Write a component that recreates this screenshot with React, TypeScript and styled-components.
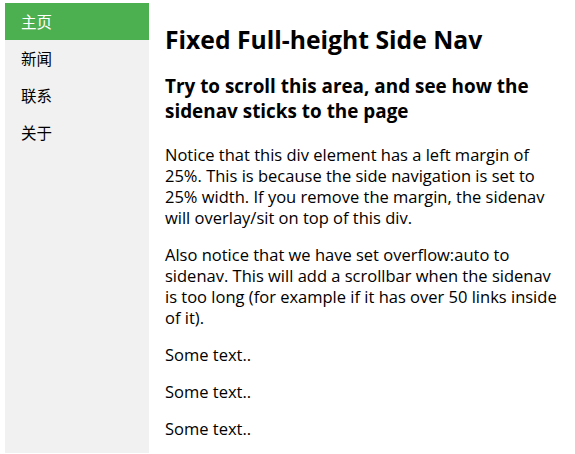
import styled, { createGlobalStyle } from 'styled-components';

const GlobalStyle = createGlobalStyle`
  html, body {
    margin: 0;
    padding: 0;
    background: #ffffff;
  }
  body {
    font-family: "Open Sans", "Noto Sans CJK SC", sans-serif;
    color: #000000;
  }
`;

const navItems = ['主页', '新闻', '联系', '关于'];

export default function App() {
  return (
    <>
      <GlobalStyle />
      <Page>
        <SideNav>
          {navItems.map((item, i) => (
            <NavLink key={item} href="#" $active={i === 0}>
              {item}
            </NavLink>
          ))}
        </SideNav>
        <Content>
          <Title>Fixed Full-height Side Nav</Title>
          <Subtitle>Try to scroll this area, and see how the sidenav sticks to the page</Subtitle>
          <Text>
            Notice that this div element has a left margin of 25%. This is because the side
            navigation is set to 25% width. If you remove the margin, the sidenav will
            overlay/sit on top of this div.
          </Text>
          <Text>
            Also notice that we have set overflow:auto to sidenav. This will add a scrollbar
            when the sidenav is too long (for example if it has over 50 links inside of it).
          </Text>
          <Text>Some text..</Text>
          <Text>Some text..</Text>
          <Text>Some text..</Text>
        </Content>
      </Page>
    </>
  );
}

const Page = styled.div`
  display: flex;
  align-items: flex-start;
  padding: 3px 0 0 5px;
  height: 454px;
  box-sizing: border-box;
  overflow: hidden;
`;

const SideNav = styled.nav`
  flex: 0 0 144px;
  height: 450px;
  background-color: #f1f1f1;
  display: flex;
  flex-direction: column;
`;

const NavLink = styled.a<{ $active?: boolean }>`
  display: block;
  padding: 8px 16px;
  height: 21px;
  line-height: 21px;
  font-family: "Noto Sans CJK SC", sans-serif;
  font-size: 15.5px;
  text-decoration: none;
  color: ${(p) => (p.$active ? '#ffffff' : '#000000')};
  background-color: ${(p) => (p.$active ? '#4caf50' : 'transparent')};
`;

const Content = styled.main`
  flex: 1;
  padding: 1px 16px;
  min-width: 0;
`;

const Title = styled.h1`
  font-size: 24.7px;
  line-height: 32px;
  font-weight: 700;
  margin: 20px 0 18px;
`;

const Subtitle = styled.h3`
  font-size: 18.9px;
  line-height: 25px;
  font-weight: 700;
  margin: 18px 0 20px;
`;

const Text = styled.p`
  font-size: 16.5px;
  line-height: 21px;
  margin: 16px 0;
`;
